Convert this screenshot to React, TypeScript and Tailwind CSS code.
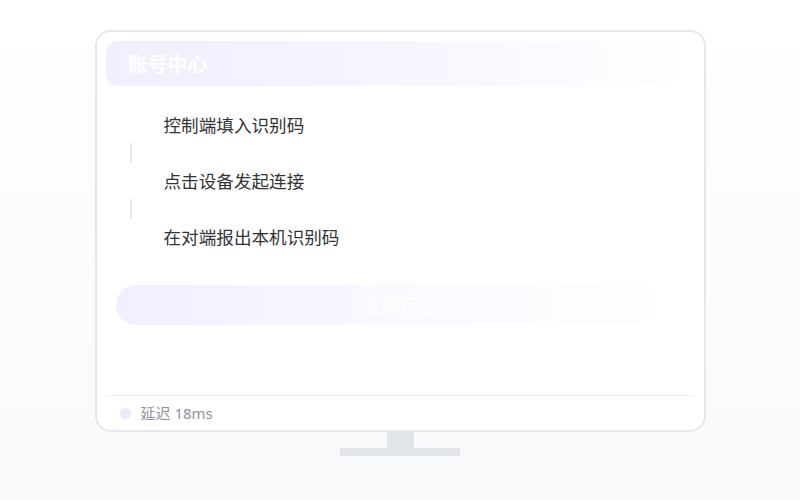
import React from "react";

const steps = ["控制端填入识别码", "点击设备发起连接", "在对端报出本机识别码"];

export default function App() {
  return (
    <div
      className="w-[800px] h-[500px] bg-gradient-to-b from-white to-[#f8f9fa] flex flex-col items-center pt-[30px]"
      style={{ fontFamily: '"Noto Sans", "Noto Sans CJK SC", sans-serif' }}
    >
      <div className="w-[611px] h-[402px] rounded-[16px] border-2 border-[#e5e7eb] bg-white flex flex-col p-[9px] pb-0">
        <div className="h-[45px] rounded-[12px] bg-gradient-to-r from-[#f1eefe] via-[#f7f5ff] to-transparent flex items-center pl-[22px] pt-[2px]">
          <span className="text-[20px] font-semibold text-white">账号中心</span>
        </div>
        <div className="mt-[21px] flex flex-col">
          {steps.map((s, i) => (
            <div key={s} className="flex flex-col">
              <div className="h-[36px] flex items-center pl-[58px] text-[17.6px] text-[#333333]">{s}</div>
              {i < steps.length - 1 && (
                <div className="h-[20px] pl-[24px]">
                  <div className="w-[2px] h-full bg-[#e5e7eb]" />
                </div>
              )}
            </div>
          ))}
        </div>
        <div className="mt-[30px] mx-[10px] h-[40px] rounded-full bg-gradient-to-r from-[#f1eefe] via-[#faf9ff] to-transparent flex items-center justify-center text-[18px] text-white">
          立即连接
        </div>
        <div className="flex-1" />
        <div className="mx-[1px] h-px bg-[#eef0f3]" />
        <div className="h-[34px] flex items-center pl-[14px] gap-[10px]">
          <div className="w-[11px] h-[11px] rounded-full bg-[#eeeafc]" />
          <span className="text-[15px] text-[#8e929b]">延迟 18ms</span>
        </div>
      </div>
      <div className="w-[27px] h-[16px] bg-[#e2e5e9]" />
      <div className="w-[120px] h-[8px] bg-[#e2e5e9]" />
    </div>
  );
}
